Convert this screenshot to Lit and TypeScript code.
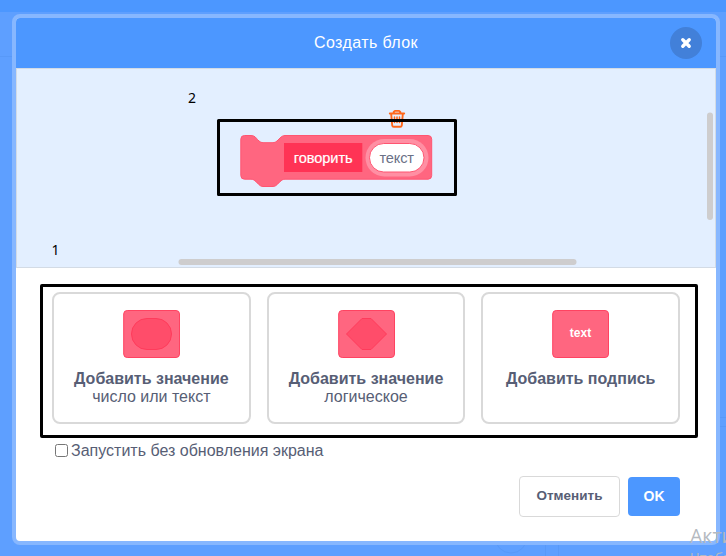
import { LitElement, html, css, svg } from "lit";
import { customElement } from "lit/decorators.js";

@customElement("option-card")
class OptionCard extends LitElement {
  static properties = { kind: {}, heading: {}, note: {} };
  declare kind: string;
  declare heading: string;
  declare note: string;
  static styles = css`
    :host {
      flex: 1 1 0;
      display: flex;
      flex-direction: column;
      align-items: center;
      box-sizing: border-box;
      height: 132px;
      padding-top: 16px;
      border: 2px solid #d9d9d9;
      border-radius: 8px;
      background: #fff;
    }
    svg { display: block; width: 57px; height: 48px; margin-bottom: 12px; }
    .base { fill: #ff6680; stroke: #ff4361; }
    .inner { fill: #ff4d6a; stroke: #ff3b5b; }
    .word { fill: #fff; font: bold 12px "Liberation Sans", Arial, sans-serif; }
    .heading { font-weight: bold; line-height: 18px; white-space: nowrap; }
    .note { line-height: 18px; white-space: nowrap; }
  `;
  render() {
    const inner =
      this.kind === "value"
        ? svg`<rect class="inner" x="8.5" y="8.500" width="40" height="31" rx="15.500" />`
        : this.kind === "boolean"
          ? svg`<path class="inner" d="M8.500 24 24 8.500H33L48.500 24 33 39.500H24Z" />`
          : svg`<text class="word" x="28.500" y="27" text-anchor="middle" textLength="21.500">text</text>`;
    return html`
      <svg viewBox="0 0 57 48">
        <rect class="base" x=".7" y=".5" width="55.800" height="47" rx="3.500" />
        ${inner}
      </svg>
      <div class="heading">${this.heading}</div>
      <div class="note">${this.note}</div>
    `;
  }
}

@customElement("app-root")
class AppRoot extends LitElement {
  static styles = css`
    :host {
      display: block;
      position: relative;
      box-sizing: border-box;
      width: 726px;
      height: 556px;
      overflow: hidden;
      padding: 14px 6px 0 12px;
      background: linear-gradient(#4c97ff 12px, #5e9fff 12px);
      font-family: "Liberation Sans", Arial, sans-serif;
      font-size: 16px;
      color: #575e75;
    }
    .backdrop { position: absolute; left: 0; top: 0; }
    .modal {
      position: relative;
      box-sizing: border-box;
      height: 531px;
      border: 4px solid #87b7ff;
      border-radius: 8px;
      background: #fff;
      overflow: hidden;
    }
    .header {
      display: grid;
      grid-template-columns: 1fr auto 1fr;
      align-items: center;
      height: 50px;
      background: #4c97ff;
      color: #fff;
    }
    .title { grid-column: 2; letter-spacing: 0.4px; }
    .close {
      justify-self: end;
      margin-right: 14px;
      width: 32px;
      height: 32px;
      border-radius: 50%;
      background: #4280d9;
    }
    .close svg { display: block; }
    .canvas {
      position: relative;
      box-sizing: border-box;
      height: 200px;
      border: 1px solid #d3dbe5;
      background: #e3efff;
    }
    .canvas svg { display: block; }
    .mark { fill: #000; font: 14px "Noto Sans", sans-serif; }
    .label { font: 14.6px "Liberation Sans", Arial, sans-serif; }
    .options {
      box-sizing: border-box;
      display: flex;
      gap: 16px;
      width: 658px;
      height: 154px;
      margin: 16px 0 0 24px;
      padding: 5px 15px 0 9px;
      border: 3px solid #000;
      border-radius: 2px;
    }
    .check {
      display: flex;
      align-items: center;
      gap: 3px;
      height: 25px;
      margin-left: 39px;
    }
    .check input { width: 13px; height: 13px; margin: 0 0 1px; }
    .buttons {
      display: flex;
      justify-content: flex-end;
      align-items: center;
      gap: 8px;
      margin: 13px 36px 0 0;
    }
    button {
      box-sizing: border-box;
      padding: 0 0 2px;
      font: bold 14px "Liberation Sans", Arial, sans-serif;
      border-radius: 4px;
    }
    .cancel {
      width: 101px;
      height: 41px;
      border: 1px solid #d9d9d9;
      background: #fff;
      color: #575e75;
      font-size: 13.5px;
    }
    .ok { width: 52px; height: 39px; border: 0; background: #4c97ff; color: #fff; }
    .watermark {
      position: absolute;
      left: 690px;
      top: 524px;
      font: 19.5px/24px "Open Sans", sans-serif;
      color: #b4b9c0;
      white-space: nowrap;
    }
    .watermark small { display: block; font-size: 14px; line-height: 20px; }
  `;
  render() {
    return html`
      <svg class="backdrop" width="726" height="556" fill="none" stroke="#5899f8">
        <path d="M0 56.500H12M720 56.500H726M720 417.500H726M720 426.500H726" />
        <circle cx="511" cy="537" r="16" />
        <path d="M545.500 540V556M558.500 540V556" />
      </svg>
      <div class="modal">
        <div class="header">
          <div class="title">Создать блок</div>
          <div class="close">
            <svg width="32" height="32" viewBox="0 0 32 32">
              <path d="M12.800 12.800 19.200 19.200M19.200 12.800 12.800 19.200" stroke="#fff" stroke-width="3.400" stroke-linecap="round" />
            </svg>
          </div>
        </div>
        <div class="canvas">
          <svg width="698" height="198" viewBox="17 69 698 198">
            <text class="mark" x="188" y="103">2</text>
            <text class="mark" x="51.500" y="255">1</text>
            <g fill="none" stroke="#ff661a" stroke-width="1.900" stroke-linecap="round" stroke-linejoin="round">
              <path d="M389.800 113.500H404.200M393.700 113V112L394.900 110.900H399.100L400.300 112V113" />
              <path d="M391.200 114 392.200 125.300Q392.400 126.700 393.700 126.700H400.300Q401.600 126.700 401.800 125.300L402.800 114" />
              <path d="M394.500 117V122.500M397 117V122.500M399.500 117V122.500" stroke-width="1.500" />
            </g>
            <path d="M244.500 135.500H251C255 135.500 256 138 257.500 139.500L259 141Q260.700 142.700 263 142.700H273Q275.300 142.700 277 141L280 138C281.500 136.500 283 135.500 285 135.500H428A3.700 3.700 0 0 1 431.700 139.200V175.500A3.700 3.700 0 0 1 428 179.200H285C283 179.200 281.500 180.200 280 181.700L277 184.700Q275.300 186.500 273 186.500H263Q260.700 186.500 259 184.700L256 181.700C254.500 180.200 253 179.200 251 179.200H244.500A3.700 3.700 0 0 1 240.800 175.500V139.200A3.700 3.700 0 0 1 244.500 135.500Z" fill="#ff6680" stroke="#ff5571" />
            <rect x="284" y="143" width="78.300" height="29" fill="#ff3355" />
            <rect x="365.500" y="139" width="63" height="37.500" rx="18.700" fill="#ff8fa3" />
            <rect x="369.500" y="143.500" width="54.500" height="28.500" rx="14.200" fill="#fff" stroke="#ff5571" />
            <text class="label" x="293.700" y="163" fill="#fff" textLength="59" stroke="#fff" stroke-width=".2">говорить</text>
            <text class="label" x="379.500" y="163" fill="#6b7186" textLength="34.500">текст</text>
            <rect x="178.500" y="259" width="398" height="6" rx="3" fill="#cecdce" />
            <rect x="707" y="112.500" width="6" height="107.500" rx="3" fill="#cecdce" />
            <rect x="218.500" y="120.500" width="237" height="74" fill="none" stroke="#000" stroke-width="3" stroke-linejoin="round" />
          </svg>
        </div>
        <div class="options">
          <option-card kind="value" heading="Добавить значение" note="число или текст"></option-card>
          <option-card kind="boolean" heading="Добавить значение" note="логическое"></option-card>
          <option-card kind="label" heading="Добавить подпись" note=""></option-card>
        </div>
        <label class="check"><input type="checkbox" />Запустить без обновления экрана</label>
        <div class="buttons">
          <button class="cancel">Отменить</button>
          <button class="ok">OK</button>
        </div>
      </div>
      <div class="watermark">Активация<small>Чтобы</small></div>
    `;
  }
}
